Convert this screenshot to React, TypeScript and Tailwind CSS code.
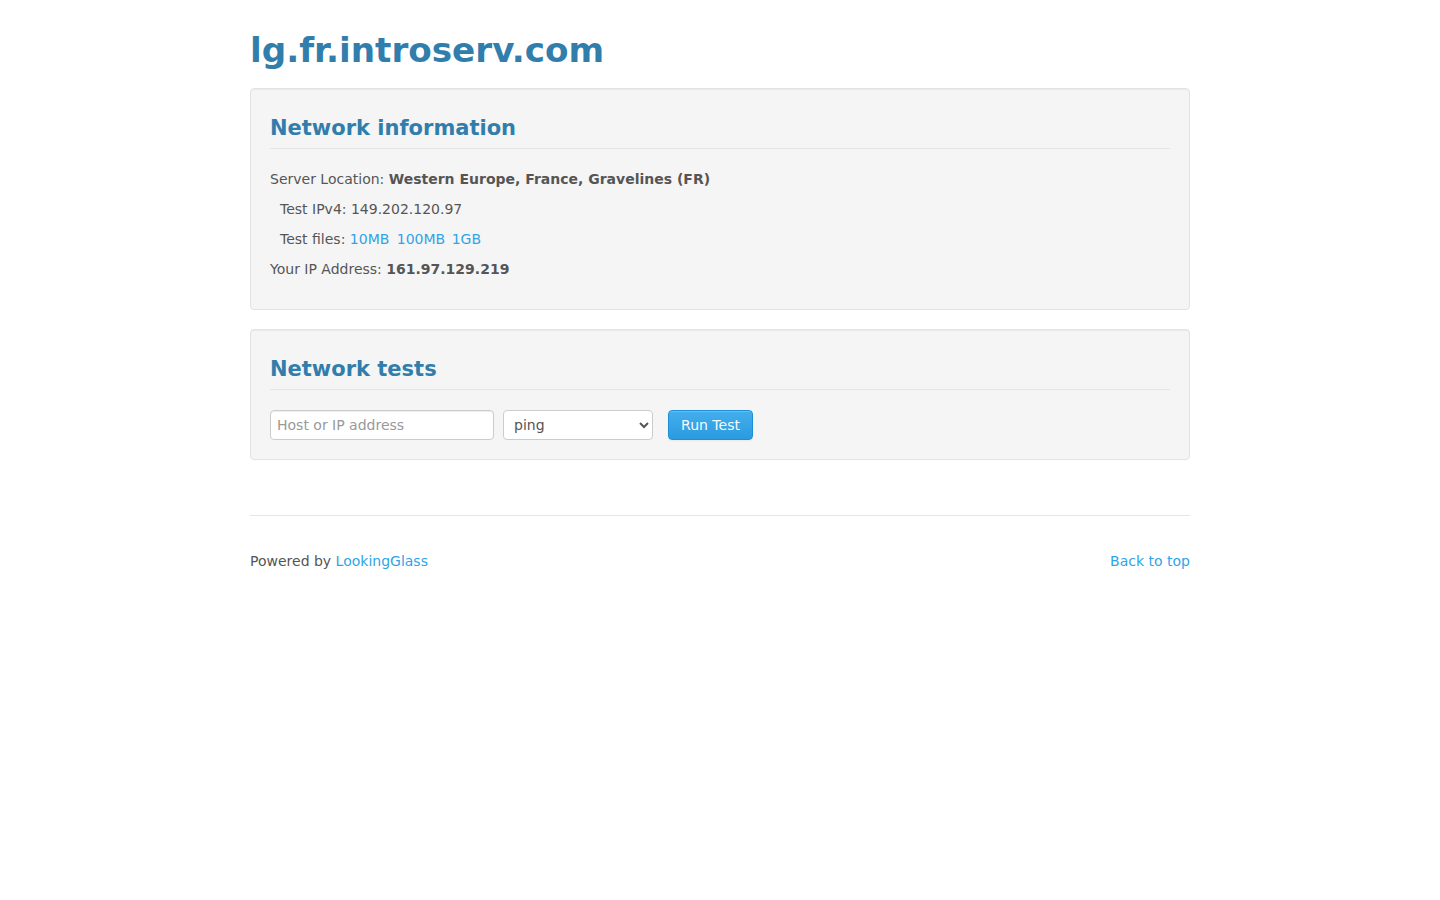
import React from 'react';

const font = "font-['DejaVu_Sans',sans-serif]";

const Well = ({ title, children, tight }: { title: string; children: React.ReactNode; tight?: boolean }) => (
  <div
    className={
      tight
        ? 'bg-[#f5f5f5] border border-[#e3e3e3] rounded-[4px] shadow-[inset_0_1px_1px_rgba(0,0,0,0.05)] px-[19px] pt-[19px] pb-[19px]'
        : 'bg-[#f5f5f5] border border-[#e3e3e3] rounded-[4px] shadow-[inset_0_1px_1px_rgba(0,0,0,0.05)] px-[19px] pt-[19px] pb-[20px]'
    }
  >
    <h3 className="text-[21px] leading-[40px] font-bold text-[#317eac] border-b border-[#e5e5e5] mb-[20px]">
      {title}
    </h3>
    {children}
  </div>
);

const Row = ({ children, indent }: { children: React.ReactNode; indent?: boolean }) => (
  <div className={indent ? 'pl-[10px] leading-[20px] mb-[10px]' : 'leading-[20px] mb-[10px]'}>{children}</div>
);

const App = () => {
  return (
    <div className={`min-h-screen bg-white text-[#555555] text-[14px] ${font}`}>
      <div className="w-[940px] mx-auto pt-[30px]">
        <h1 className="text-[34.2px] leading-[40px] font-bold text-[#317eac] mb-[18px]">lg.fr.introserv.com</h1>

        <Well title="Network information">
          <Row>
            Server Location: <b className="font-bold">Western Europe, France, Gravelines (FR)</b>
          </Row>
          <Row indent>Test IPv4: 149.202.120.97</Row>
          <Row indent>
            Test files:{' '}
            <a href="#" className="text-[#2fa4e7] mr-[3px]">10MB</a>{' '}
            <a href="#" className="text-[#2fa4e7] mr-[2px]">100MB</a>{' '}
            <a href="#" className="text-[#2fa4e7]">1GB</a>
          </Row>
          <Row>
            Your IP Address: <b className="font-bold">161.97.129.219</b>
          </Row>
        </Well>

        <div className="mt-[19px]">
          <Well title="Network tests" tight>
            <form className="flex items-center" onSubmit={e => e.preventDefault()}>
              <input
                type="text"
                placeholder="Host or IP address"
                className="w-[224px] h-[30px] px-[6px] bg-white border border-[#cccccc] rounded-[4px] shadow-[inset_0_1px_1px_rgba(0,0,0,0.075)] text-[14px] text-[#555555] placeholder:text-[#999999] outline-none"
              />
              <select
                defaultValue="ping"
                className="ml-[9px] w-[150px] h-[30px] px-[6px] bg-white border border-[#cccccc] rounded-[4px] text-[14px] text-[#555555]"
              >
                <option value="ping">ping</option>
                <option value="ping6">ping6</option>
                <option value="traceroute">traceroute</option>
                <option value="traceroute6">traceroute6</option>
                <option value="mtr">mtr</option>
                <option value="mtr6">mtr6</option>
              </select>
              <button
                type="submit"
                className="ml-[15px] w-[85px] h-[30px] rounded-[4px] border border-[#1d8fd8] bg-gradient-to-b from-[#43aeec] to-[#2a9be0] text-[#f4faff] text-[14px] shadow-[inset_0_1px_0_rgba(255,255,255,0.2),0_1px_2px_rgba(0,0,0,0.05)]"
              >
                Run Test
              </button>
            </form>
          </Well>
        </div>

        <footer className="mt-[55px] border-t border-[#e5e5e5] pt-[35px] flex justify-between leading-[20px]">
          <span>
            Powered by <a href="#" className="text-[#2fa4e7]">LookingGlass</a>
          </span>
          <a href="#" className="text-[#2fa4e7]">Back to top</a>
        </footer>
      </div>
    </div>
  );
};

export default App;
